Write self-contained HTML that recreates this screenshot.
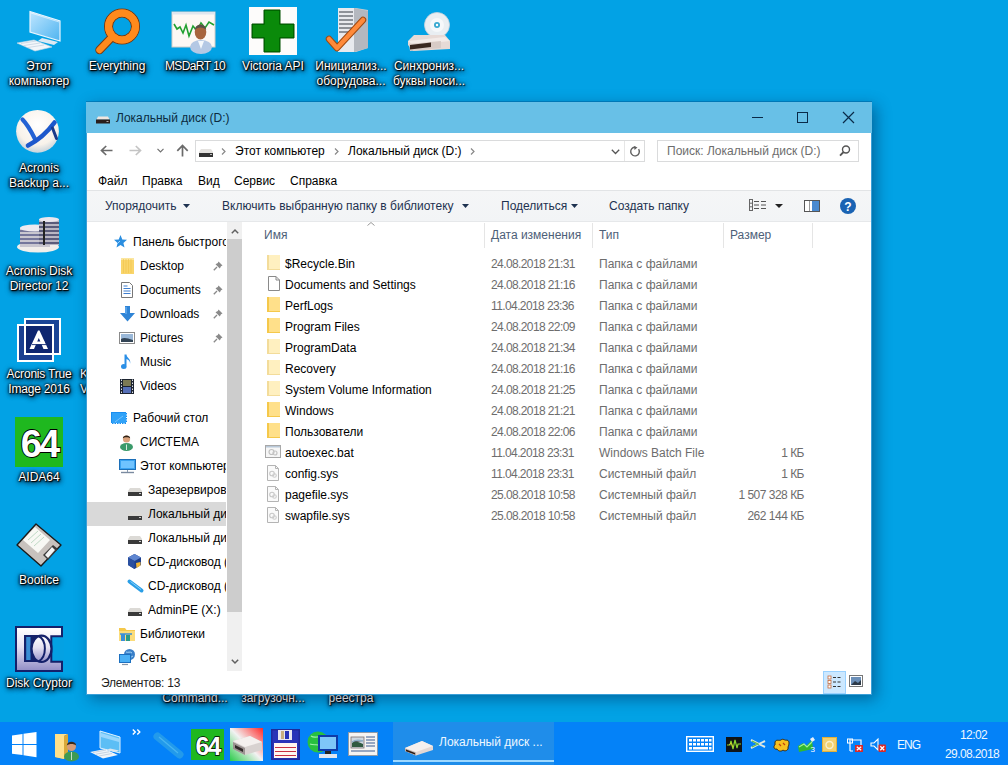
<!DOCTYPE html>
<html><head><meta charset="utf-8">
<style>
*{margin:0;padding:0;box-sizing:border-box}
html,body{width:1008px;height:765px;overflow:hidden}
body{background:#02a2e5;font-family:"Liberation Sans",sans-serif;font-size:12px;position:relative}
.a{position:absolute}
.x{position:absolute;font-size:12px;line-height:14px;white-space:nowrap;color:#000}
.dl{position:absolute;color:#fff;text-align:center;font-size:12px;line-height:15px;text-shadow:1px 1px 1px #000,0 0 2px #000,0 0 3px #000,1px 2px 4px #001020,1px 1px 6px rgba(0,20,50,.9);width:76px}
#win{position:absolute;left:86px;top:102px;width:786px;height:593px;background:#fff;border:1px solid #3a9fd8;border-top:0;box-shadow:4px 4px 14px rgba(0,30,70,.45)}
#taskbar{position:absolute;left:0;top:722px;width:1008px;height:43px;background:#0482f8}
.tb{color:#1e3250}
.hd{color:#4d6078}
.g{color:#6d6d6d}
.dt{letter-spacing:-0.6px}
.nv{overflow:hidden}
svg{position:absolute;overflow:visible}
</style></head><body>

<!--DESK-->
<!-- Этот компьютер -->
<svg style="left:16px;top:10px" width="46" height="44">
 <defs><linearGradient id="mg" x1="0" y1="0" x2="1" y2="1"><stop offset="0" stop-color="#bfe6ff"/><stop offset="1" stop-color="#4fb4f0"/></linearGradient></defs>
 <path d="M14 1.5L44 11V31L14 22z" fill="url(#mg)" stroke="#e9f6ff" stroke-width="1.2"/>
 <path d="M15 3L43 12" stroke="#fff" stroke-width="0.8" opacity=".7"/>
 <path d="M22 31L38 35L42 32L26 28z" fill="#dfe9f2"/>
 <path d="M1 33L18 30L36 37L19 41z" fill="#f3f6fa" stroke="#c9d6e2" stroke-width="0.6"/>
 <path d="M5 33.5L20 31M8 35.5L24 33M12 37.5L28 35" stroke="#b8c8d8" stroke-width="0.6"/>
</svg>
<div class="dl x" style="left:0px;top:59px;width:78px;text-align:center;line-height:15px">Этот<br>компьютер</div>

<!-- Everything -->
<svg style="left:94px;top:7px" width="48" height="48">
 <circle cx="28" cy="19.5" r="13.5" fill="none" stroke="#7a3a10" stroke-width="9"/>
 <circle cx="28" cy="19.5" r="13.5" fill="none" stroke="#ff8a1c" stroke-width="7"/>
 <path d="M18 30L5.5 43" stroke="#7a3a10" stroke-width="8.5" stroke-linecap="round"/>
 <path d="M18 30L5.5 43" stroke="#ff8a1c" stroke-width="6.5" stroke-linecap="round"/>
 <circle cx="28" cy="19.5" r="13.5" fill="none" stroke="#ff8a1c" stroke-width="7"/>
</svg>
<div class="dl x" style="left:78px;top:59px;width:78px;text-align:center">Everything</div>

<!-- MSDaRT -->
<svg style="left:171px;top:11px" width="46" height="42">
 <rect x="1" y="1" width="43" height="35" fill="#fdf8f4" stroke="#d4cec8" stroke-width="1"/>
 <rect x="1" y="1" width="43" height="2.5" fill="#e0e6ee"/>
 <path d="M3 13L6 18L9 16L12 22L15 14L18 25L22 15L26 20L30 12L34 17L38 11L43 14" fill="none" stroke="#22a030" stroke-width="1.6"/>
 <ellipse cx="30" cy="36" rx="11" ry="7" fill="#b4c8e4"/>
 <path d="M27 30L30 38L33 30z" fill="#f4f8fc"/>
 <ellipse cx="29.5" cy="21" rx="5.8" ry="7.5" fill="#a8643c"/>
 <path d="M23.8 19C24 12 35 12 35.2 19C33 15.5 26 15.5 23.8 19z" fill="#5a5048"/>
</svg>
<div class="dl x" style="left:156px;top:59px;width:78px;text-align:center;letter-spacing:-0.6px">MSDaRT 10</div>

<!-- Victoria -->
<svg style="left:249px;top:7px" width="48" height="48">
 <rect width="48" height="48" fill="#fdfcfb"/>
 <path d="M15 3H31V17H45V31H31V45H15V31H3V17H15z" fill="#007a00" stroke="#005000" stroke-width="1"/>
 <path d="M16 4H30V18H44V30H30V44H16V30H4V18H16z" fill="#0a8a0a"/>
</svg>
<div class="dl x" style="left:234px;top:59px;width:78px;text-align:center">Victoria API</div>

<!-- Инициализ -->
<svg style="left:326px;top:7px" width="44" height="46">
 <path d="M12 1H30L42 3V41L30 45H12z" fill="#c9ccd0"/>
 <path d="M12 1H28V45H12z" fill="#e8eaee"/>
 <path d="M28 1L42 4V41L28 45z" fill="#b4b8bf"/>
 <path d="M13 5H27M13 9H27M13 13H27M13 17H27M13 21H27M13 25H27" stroke="#70757c" stroke-width="1.6"/>
 <path d="M3 32L11 41L37 13" fill="none" stroke="#a04a10" stroke-width="6.5" stroke-linejoin="round" stroke-linecap="round"/>
 <path d="M3 32L11 41L37 13" fill="none" stroke="#ff8a3a" stroke-width="4.5" stroke-linejoin="round" stroke-linecap="round"/>
</svg>
<div class="dl x" style="left:312px;top:59px;width:78px;text-align:center">Инициализ...<br>оборудова...</div>

<!-- Синхрониз -->
<svg style="left:407px;top:11px" width="46" height="42">
 <circle cx="30" cy="14" r="12.5" fill="#e9eef2" stroke="#c9d2da" stroke-width="0.8"/>
 <circle cx="30" cy="14" r="7" fill="#f6f8fa"/>
 <circle cx="30" cy="14" r="3" fill="#38a8d0"/>
 <circle cx="30" cy="14" r="1.2" fill="#fff"/>
 <path d="M7 24H38L43 30V38L6 40L1 34V30z" fill="#e7dad6"/>
 <path d="M1 30L38 26L43 30L6 34z" fill="#f3ebe8"/>
 <path d="M2 33L34 30V37L3 40z" fill="#d8cbc6"/>
 <path d="M3 34L24 31.5V36L3 38.5z" fill="#3a2820"/>
</svg>
<div class="dl x" style="left:390px;top:59px;width:78px;text-align:center">Синхрониз...<br>буквы носи...</div>

<!-- Acronis Backup -->
<svg style="left:15px;top:109px" width="46" height="46">
 <defs><radialGradient id="ab" cx=".5" cy=".35" r=".62"><stop offset="0" stop-color="#ffffff"/><stop offset=".75" stop-color="#f8f2ea"/><stop offset="1" stop-color="#cfd8de"/></radialGradient></defs>
 <circle cx="22.5" cy="22.3" r="21.4" fill="url(#ab)"/>
 <path d="M7.5 10.5C11 14 15 20 20 30" fill="none" stroke="#2462d4" stroke-width="4.2" stroke-linecap="round"/>
 <path d="M13 36.5C22 32 31 25 39.5 13.5" fill="none" stroke="#1d58cc" stroke-width="4.6" stroke-linecap="round"/>
 <path d="M37.5 19L41.5 29.5" stroke="#1a3a8a" stroke-width="3" stroke-linecap="round"/>
</svg>
<div class="dl x" style="left:0px;top:161px;width:78px;text-align:center">Acronis<br>Backup a...</div>

<!-- Acronis Disk Director -->
<svg style="left:15px;top:216px" width="48" height="38">
 <ellipse cx="23" cy="31" rx="21" ry="5.5" fill="#f2eeea"/>
 <rect x="5" y="12" width="30" height="19" fill="#c9c6cf"/>
 <path d="M5 15H35M5 19H35M5 23H35M5 27H35" stroke="#595c8a" stroke-width="1.4"/>
 <ellipse cx="20" cy="12" rx="15" ry="3.5" fill="#eeeaf0"/>
 <rect x="24" y="3" width="20" height="26" fill="#b9b6c2"/>
 <path d="M24 7H44M24 11H44M24 15H44M24 19H44M24 23H44M24 27H44" stroke="#3d3f64" stroke-width="1.4"/>
 <ellipse cx="34" cy="3.5" rx="10" ry="2.5" fill="#ebe7ee"/>
 <path d="M29 5V29" stroke="#222" stroke-width="2"/>
</svg>
<div class="dl x" style="left:0px;top:264px;width:78px;text-align:center">Acronis Disk<br>Director 12</div>

<!-- Acronis True Image -->
<svg style="left:16px;top:317px" width="46" height="46">
 <rect x="1" y="7" width="37" height="37" fill="#1b3f90"/>
 <rect x="8" y="1" width="37" height="37" fill="#1a4496"/>
 <rect x="9" y="8" width="28" height="29" fill="#0e2670"/>
 <rect x="9" y="2" width="35" height="35" fill="none" stroke="#fff" stroke-width="2"/>
 <rect x="2" y="8" width="35" height="36" fill="none" stroke="#fff" stroke-width="2"/>
 <path d="M13.5 32L22 13.5H23.5L32 32H27.5L22.8 21L18 32z" fill="#fff"/>
 <rect x="17" y="24.5" width="11.5" height="2.8" fill="#fff"/>
 <path d="M16 27.6H30" stroke="#0e2670" stroke-width="0.9"/>
</svg>
<div class="dl x" style="left:0px;top:367px;width:78px;text-align:center;letter-spacing:-0.2px">Acronis True<br>Image 2016</div>
<div class="dl x" style="left:80px;top:367px;width:20px;text-align:left">K<br>V</div>

<!-- AIDA64 -->
<svg style="left:15px;top:417px" width="48" height="50">
 <rect width="48" height="50" fill="#1fb81f"/>
 <text x="24" y="39.5" font-family="Liberation Sans" font-weight="bold" font-size="38" fill="#fff" stroke="#000" stroke-width="1.8" paint-order="stroke" text-anchor="middle" letter-spacing="-3">64</text>
</svg>
<div class="dl x" style="left:0px;top:470px;width:78px;text-align:center">AIDA64</div>

<!-- Bootlce -->
<svg style="left:16px;top:523px" width="46" height="44">
 <path d="M20 1L45 22L25 43L1 22z" fill="#c8c2be" stroke="#1a1a1a" stroke-width="1.4" stroke-linejoin="round"/>
 <path d="M19 4L34 17L22 30L7 17z" fill="#f8f8f4"/>
 <path d="M12 17L22 8M15 20L25 11M18 23L28 14" stroke="#b0d0b8" stroke-width="0.8"/>
 <path d="M27 32L37 22L42 26L32 37z" fill="#3a3a3a"/>
 <path d="M29 32L36 24L39 27L32 35z" fill="#f4f4f4"/>
</svg>
<div class="dl x" style="left:0px;top:573px;width:78px;text-align:center">Bootlce</div>

<!-- Disk Cryptor -->
<svg style="left:14px;top:625px" width="50" height="48">
 <defs><linearGradient id="dc" x1="0" y1="0" x2="0" y2="1"><stop offset="0" stop-color="#ffffff"/><stop offset=".45" stop-color="#e4e0f2"/><stop offset="1" stop-color="#9490c8"/></linearGradient></defs>
 <rect x="1" y="1" width="48" height="46" fill="#14206a"/>
 <rect x="3" y="3" width="44" height="42" fill="url(#dc)"/>
 <rect x="37.5" y="11" width="12.5" height="26" fill="#04a1e3"/>
 <path d="M49 11.2H37.3V36.8H49" fill="none" stroke="#14206a" stroke-width="2"/>
 <rect x="10" y="10" width="18" height="27" fill="#14206a"/>
 <rect x="12.2" y="12" width="4.3" height="23" fill="#3a8ed4"/>
 <ellipse cx="27.5" cy="23.8" rx="10" ry="13.2" fill="url(#dc)" stroke="#14206a" stroke-width="2.2"/>
 <path d="M24.5 11C33 15 33 32 24.5 36.5" fill="none" stroke="#14206a" stroke-width="2"/>
</svg>
<div class="dl x" style="left:0px;top:676px;width:78px;text-align:center">Disk Cryptor</div>

<!-- labels under window -->
<div class="dl x" style="left:156px;top:691px;width:78px;text-align:center">Command...</div>
<div class="dl x" style="left:234px;top:691px;width:78px;text-align:center">загрузочн...</div>
<div class="dl x" style="left:312px;top:691px;width:78px;text-align:center">реестра</div>

<!--/DESK-->
<!-- ============ WINDOW ============ -->
<div id="win"></div>
<!-- title bar -->
<div class="a" style="left:86px;top:101px;width:786px;height:1px;background:rgba(0,90,150,.45)"></div>
<div class="a" style="left:86px;top:102px;width:786px;height:31px;background:#68c0e7"></div>
<svg style="left:96px;top:116px" width="14" height="8"><path d="M2 0.5h10l1.5 3H0.5z" fill="#f0e6e0"/><rect x="0" y="3.5" width="14" height="4" fill="#2a1e1c"/><rect x="10.5" y="5" width="2" height="1" fill="#b0a8a8"/></svg>
<div class="x" style="left:116px;top:111px;color:#0b2b40">Локальный диск (D:)</div>
<svg style="left:752px;top:117px" width="11" height="1"><rect width="11" height="1" fill="#0a2a48"/></svg>
<svg style="left:797px;top:112px" width="11" height="11"><rect x="0.5" y="0.5" width="10" height="10" fill="none" stroke="#0a2a48"/></svg>
<svg style="left:843px;top:112px" width="11" height="11"><path d="M0 0L11 11M11 0L0 11" stroke="#0a2a48" stroke-width="1.2"/></svg>

<!-- nav buttons -->
<svg style="left:100px;top:145px" width="13" height="11"><path d="M12.5 5.5H1.8M6.2 1L1.5 5.5L6.2 10" fill="none" stroke="#6a6a6a" stroke-width="1.7"/></svg>
<svg style="left:129px;top:145px" width="13" height="11"><path d="M0.5 5.5H11.2M6.8 1L11.5 5.5L6.8 10" fill="none" stroke="#c4c4c4" stroke-width="1.7"/></svg>
<svg style="left:157px;top:148px" width="7" height="5"><path d="M0.5 0.8L3.5 3.8L6.5 0.8" fill="none" stroke="#707070" stroke-width="1.2"/></svg>
<svg style="left:176px;top:144px" width="13" height="13"><path d="M6.5 12.5V1.8M1.3 6.8L6.5 1.5L11.7 6.8" fill="none" stroke="#6a6a6a" stroke-width="1.7"/></svg>
<!-- address box -->
<div class="a" style="left:195px;top:140px;width:450px;height:22px;border:1px solid #dadbdc;background:#fff"></div>
<div class="a" style="left:624px;top:141px;width:1px;height:20px;background:#e6e6e6"></div>
<svg style="left:199px;top:149px" width="14" height="8"><path d="M2 0h10l2 3v5H0V3z" fill="#e4e2df"/><rect x="0" y="4" width="14" height="4" fill="#333"/><rect x="11" y="5" width="2" height="1" fill="#bbb"/></svg>
<svg style="left:221px;top:148px" width="5" height="7"><path d="M1 0.5L4 3.5L1 6.5" fill="none" stroke="#888" stroke-width="1.2"/></svg>
<div class="x" style="left:235px;top:144px">Этот компьютер</div>
<svg style="left:334px;top:148px" width="5" height="7"><path d="M1 0.5L4 3.5L1 6.5" fill="none" stroke="#888" stroke-width="1.2"/></svg>
<div class="x" style="left:348px;top:144px">Локальный диск (D:)</div>
<svg style="left:470px;top:148px" width="5" height="7"><path d="M1 0.5L4 3.5L1 6.5" fill="none" stroke="#888" stroke-width="1.2"/></svg>
<svg style="left:611px;top:149px" width="9" height="6"><path d="M0.8 0.8L4.5 4.5L8.2 0.8" fill="none" stroke="#555" stroke-width="1.3"/></svg>
<svg style="left:630px;top:146px" width="11" height="11"><path d="M8.6 3.2A4.3 4.3 0 1 1 5.5 1.3" fill="none" stroke="#606060" stroke-width="1.4"/><path d="M4 0L7.5 1.5L4.5 4z" fill="#606060"/></svg>
<!-- search -->
<div class="a" style="left:657px;top:140px;width:202px;height:22px;border:1px solid #dadbdc;background:#fff"></div>
<div class="x g" style="left:667px;top:144px">Поиск: Локальный диск (D:)</div>
<svg style="left:839px;top:145px" width="12" height="12"><circle cx="7" cy="4.5" r="3.5" fill="none" stroke="#555" stroke-width="1.4"/><path d="M4.6 7L1 10.6" stroke="#555" stroke-width="1.8"/></svg>

<!-- menu -->
<div class="x" style="left:98px;top:174px">Файл</div>
<div class="x" style="left:142px;top:174px">Правка</div>
<div class="x" style="left:198px;top:174px">Вид</div>
<div class="x" style="left:234px;top:174px">Сервис</div>
<div class="x" style="left:290px;top:174px">Справка</div>

<!-- toolbar -->
<div class="a" style="left:87px;top:190px;width:784px;height:1px;background:#e2e4e6"></div>
<div class="a" style="left:87px;top:191px;width:784px;height:30px;background:linear-gradient(#f5f6f7,#f2f4f6)"></div>
<div class="a" style="left:87px;top:221px;width:784px;height:1px;background:#e6e8ea"></div>
<div class="x tb" style="left:105px;top:199px">Упорядочить</div>
<svg style="left:183px;top:204px" width="7" height="4"><path d="M0 0H7L3.5 4z" fill="#1e3250"/></svg>
<div class="x tb" style="left:222px;top:199px">Включить выбранную папку в библиотеку</div>
<svg style="left:462px;top:204px" width="7" height="4"><path d="M0 0H7L3.5 4z" fill="#1e3250"/></svg>
<div class="x tb" style="left:501px;top:199px">Поделиться</div>
<svg style="left:571px;top:204px" width="7" height="4"><path d="M0 0H7L3.5 4z" fill="#1e3250"/></svg>
<div class="x tb" style="left:609px;top:199px">Создать папку</div>
<svg style="left:749px;top:199px" width="17" height="12"><g fill="none" stroke="#666" stroke-width="1"><rect x="0.5" y="0.5" width="3" height="11"/><path d="M0.5 4.2h3M0.5 7.8h3"/></g><g stroke="#555" stroke-width="1.2"><path d="M5 2.5h5M12 2.5h5M5 6h5M12 6h5M5 9.5h5M12 9.5h5"/></g></svg>
<svg style="left:775px;top:204px" width="8" height="4"><path d="M0 0H8L4 4z" fill="#222"/></svg>
<svg style="left:804px;top:200px" width="16" height="12"><rect x="0.5" y="0.5" width="15" height="11" fill="#fff" stroke="#555"/><rect x="8" y="1" width="7" height="10" fill="#4a8ad0"/><path d="M5.5 1v10" stroke="#999"/></svg>
<svg style="left:840px;top:198px" width="16" height="16"><circle cx="8" cy="8" r="8" fill="#1a63b3"/><text x="8" y="12.5" font-family="Liberation Sans" font-weight="bold" font-size="12" fill="#fff" text-anchor="middle">?</text></svg>

<!-- nav pane -->
<div class="a" style="left:87px;top:502px;width:139px;height:24px;background:#d9d9d9"></div>
<div class="a" style="left:227px;top:222px;width:15px;height:449px;background:#f0f0f0"></div>
<div class="a" style="left:227px;top:239px;width:15px;height:373px;background:#cdcdcd"></div>
<svg style="left:231px;top:229px" width="8" height="5"><path d="M0.8 4.2L4 1L7.2 4.2" fill="none" stroke="#606060" stroke-width="1.5"/></svg>
<svg style="left:231px;top:659px" width="8" height="5"><path d="M0.8 0.8L4 4L7.2 0.8" fill="none" stroke="#606060" stroke-width="1.5"/></svg>

<div class="a nv" style="left:87px;top:222px;width:139px;height:449px">
</div>
<!--NAV-->
<svg style="left:114px;top:235px" width="13" height="13"><path d="M6.5 0L8.3 4.4L13 4.8L9.4 7.9L10.5 12.5L6.5 10L2.5 12.5L3.6 7.9L0 4.8L4.7 4.4z" fill="#2a8ee0"/><path d="M3 9L6 6" stroke="#9fd3ff" stroke-width="1"/></svg>
<div class="x nv" style="left:133px;top:235px;width:93px">Панель быстрого доступа</div>
<svg style="left:120px;top:257px" width="14" height="17"><rect x="1" y="1" width="13" height="16" fill="#f9d56b"/><rect x="1" y="1" width="13" height="2" fill="#fbe6a0"/><path d="M3.5 2v14M6 2v14M8.5 2v14M11 2v14" stroke="#f2c64e" stroke-width="0.7"/></svg>
<div class="x nv" style="left:140px;top:259px;width:86px">Desktop</div>
<svg style="left:121px;top:282px" width="12" height="16"><path d="M0.5 0.5H8.5L11.5 3.5V15.5H0.5z" fill="#fff" stroke="#777"/><path d="M2.5 4h4M2.5 6.5h7M2.5 9h7M2.5 11.5h7" stroke="#3f7fd0" stroke-width="1.2"/></svg>
<div class="x nv" style="left:140px;top:283px;width:86px">Documents</div>
<svg style="left:120px;top:306px" width="15" height="16"><path d="M5 0H10V7H15L7.5 15.5L0 7H5z" fill="#2f84d6"/><path d="M6 1V8" stroke="#7cc0ff" stroke-width="1"/></svg>
<div class="x nv" style="left:140px;top:307px;width:86px">Downloads</div>
<svg style="left:119px;top:332px" width="16" height="12"><rect x="0.5" y="0.5" width="15" height="11" fill="#fff" stroke="#8a8a8a"/><rect x="2" y="2" width="12" height="8" fill="#9ab8d8"/><path d="M2 10V7C5 5 8 6 14 8V10z" fill="#334455"/></svg>
<div class="x nv" style="left:140px;top:331px;width:86px">Pictures</div>
<svg style="left:121px;top:354px" width="11" height="16"><path d="M4.5 0.5V11.5" stroke="#2b8fe6" stroke-width="2"/><ellipse cx="2.8" cy="12.5" rx="2.8" ry="2.5" fill="#2b8fe6"/><path d="M5 0.5C6 4 10.5 5 9 10C9.5 7 7 5.5 5 5z" fill="#2b8fe6"/></svg>
<div class="x nv" style="left:140px;top:355px;width:86px">Music</div>
<svg style="left:120px;top:379px" width="14" height="15"><rect width="14" height="15" fill="#1d2430"/><rect x="3" y="1" width="8" height="6" fill="#7c7a55"/><rect x="3" y="8" width="8" height="6" fill="#5670b8"/><path d="M1.5 0.5v14M12.5 0.5v14" stroke="#dfe3ea" stroke-width="1" stroke-dasharray="1.5 1.5"/></svg>
<div class="x nv" style="left:140px;top:379px;width:86px">Videos</div>
<svg style="left:111px;top:412px" width="16" height="12"><rect width="16" height="12" fill="#1a8ef0"/><rect x="1" y="1" width="14" height="10" fill="#30a2f8"/><path d="M0 11.5H16M15.5 0V12" stroke="#fff" stroke-width="1" stroke-dasharray="1 1.5"/><path d="M4 10L12 4" stroke="#bfe2ff" stroke-width="0.8" opacity=".6"/></svg>
<div class="x nv" style="left:133px;top:411px;width:93px">Рабочий стол</div>
<svg style="left:120px;top:434px" width="13" height="16"><ellipse cx="6.5" cy="13" rx="6.5" ry="4" fill="#3a9a6a"/><circle cx="6.5" cy="5" r="3.6" fill="#d8a07a"/><path d="M2.8 4.3C3 0.5 10 0.5 10.2 4.3C9 2.8 4 2.8 2.8 4.3z" fill="#2d2218"/><path d="M6.5 10.5V16" stroke="#fff" stroke-width="0.8"/></svg>
<div class="x nv" style="left:140px;top:435px;width:86px">СИСТЕМА</div>
<svg style="left:119px;top:459px" width="17" height="15"><rect x="0.5" y="0.5" width="16" height="10" fill="#3ba3f2" stroke="#1c6fb8"/><rect x="2" y="2" width="13" height="7" fill="#70c3ff"/><path d="M2 13.5H15" stroke="#7a8aa0" stroke-width="1.4"/><path d="M8.5 11v2" stroke="#8a9ab0"/></svg>
<div class="x nv" style="left:140px;top:459px;width:86px">Этот компьютер</div>
<svg style="left:128px;top:488px" width="14" height="8"><path d="M2 0h10l2 3v5H0V3z" fill="#dcdad6"/><rect x="0" y="4" width="14" height="4" fill="#3a3a3a"/><rect x="11" y="5" width="2" height="1" fill="#ccc"/></svg>
<div class="x nv" style="left:148px;top:483px;width:78px">Зарезервировано системой</div>
<svg style="left:128px;top:512px" width="14" height="8"><path d="M2 0h10l2 3v5H0V3z" fill="#dcdad6"/><rect x="0" y="4" width="14" height="4" fill="#3a3a3a"/><rect x="11" y="5" width="2" height="1" fill="#ccc"/></svg>
<div class="x nv" style="left:148px;top:507px;width:78px">Локальный диск (D:)</div>
<svg style="left:128px;top:536px" width="14" height="8"><path d="M2 0h10l2 3v5H0V3z" fill="#dcdad6"/><rect x="0" y="4" width="14" height="4" fill="#3a3a3a"/><rect x="11" y="5" width="2" height="1" fill="#ccc"/></svg>
<div class="x nv" style="left:148px;top:531px;width:78px">Локальный диск (C:)</div>
<svg style="left:128px;top:554px" width="13" height="15"><path d="M6.5 0L13 3.5V11L6.5 15L0 11V3.5z" fill="#1e3f8c"/><path d="M6.5 0L13 3.5L6.5 7L0 3.5z" fill="#5f86d0"/><path d="M6.5 7V15L0 11V3.5z" fill="#2a4fa0"/><path d="M8 9L12.5 8V11.5L8.5 14z" fill="#f2b634"/></svg>
<div class="x nv" style="left:148px;top:555px;width:78px">CD-дисковод (F:)</div>
<svg style="left:127px;top:579px" width="17" height="14"><path d="M2.5 2.5L14.5 11.5" stroke="#2a9ee6" stroke-width="4" stroke-linecap="round"/><path d="M3.5 2.5L14 10.5" stroke="#8fd4ff" stroke-width="0.9"/></svg>
<div class="x nv" style="left:148px;top:579px;width:78px">CD-дисковод (G:)</div>
<svg style="left:128px;top:608px" width="14" height="8"><path d="M2 0h10l2 3v5H0V3z" fill="#dcdad6"/><rect x="0" y="4" width="14" height="4" fill="#3a3a3a"/><rect x="11" y="5" width="2" height="1" fill="#ccc"/></svg>
<div class="x nv" style="left:148px;top:603px;width:78px">AdminPE (X:)</div>
<svg style="left:119px;top:626px" width="16" height="15"><path d="M0 2H6L7.5 4H16V15H0z" fill="#f5c84a"/><rect x="0" y="5" width="16" height="10" fill="#fbdc7a"/><rect x="2" y="8" width="4" height="7" fill="#3a8fd8"/><rect x="7" y="9" width="4" height="6" fill="#2a9a8a"/><path d="M1 8H13" stroke="#3a8fd8" stroke-width="1.5"/></svg>
<div class="x nv" style="left:140px;top:627px;width:86px">Библиотеки</div>
<svg style="left:119px;top:649px" width="16" height="17"><circle cx="10.5" cy="5.5" r="5.5" fill="#3a7fc8"/><path d="M7 3C9 4 11 2 13 4M8 8C10 7 12 9 14 7" stroke="#aee0ff" stroke-width="0.9" fill="none"/><rect x="0.5" y="5.5" width="11" height="8" fill="#4ab0f5" stroke="#1c70c0"/><path d="M3 15.5H9" stroke="#8796a8" stroke-width="1.2"/></svg>
<div class="x nv" style="left:140px;top:651px;width:86px">Сеть</div>
<svg style="left:213px;top:261px" width="10" height="10"><path d="M5.5 0.5L9.5 4.5L8 5.2L6.8 7.5L2.5 3.2L4.8 2z" fill="#8a8a8a"/><path d="M4 6L0.8 9.2" stroke="#8a8a8a" stroke-width="1.3"/></svg>
<svg style="left:213px;top:285px" width="10" height="10"><path d="M5.5 0.5L9.5 4.5L8 5.2L6.8 7.5L2.5 3.2L4.8 2z" fill="#8a8a8a"/><path d="M4 6L0.8 9.2" stroke="#8a8a8a" stroke-width="1.3"/></svg>
<svg style="left:213px;top:309px" width="10" height="10"><path d="M5.5 0.5L9.5 4.5L8 5.2L6.8 7.5L2.5 3.2L4.8 2z" fill="#8a8a8a"/><path d="M4 6L0.8 9.2" stroke="#8a8a8a" stroke-width="1.3"/></svg>
<svg style="left:213px;top:333px" width="10" height="10"><path d="M5.5 0.5L9.5 4.5L8 5.2L6.8 7.5L2.5 3.2L4.8 2z" fill="#8a8a8a"/><path d="M4 6L0.8 9.2" stroke="#8a8a8a" stroke-width="1.3"/></svg>
<!--/NAV-->

<!-- column headers -->
<div class="a" style="left:484px;top:223px;width:1px;height:25px;background:#e5e5e5"></div>
<div class="a" style="left:592px;top:223px;width:1px;height:25px;background:#e5e5e5"></div>
<div class="a" style="left:723px;top:223px;width:1px;height:25px;background:#e5e5e5"></div>
<div class="a" style="left:812px;top:223px;width:1px;height:25px;background:#e5e5e5"></div>
<svg style="left:367px;top:222px" width="8" height="4"><path d="M0.5 3.5L4 0.5L7.5 3.5" fill="none" stroke="#999" stroke-width="1"/></svg>
<div class="x hd" style="left:264px;top:228px">Имя</div>
<div class="x hd" style="left:491px;top:228px">Дата изменения</div>
<div class="x hd" style="left:599px;top:228px">Тип</div>
<div class="x hd" style="left:730px;top:228px">Размер</div>

<!--ROWS-->
<svg style="left:267px;top:255px" width="13" height="15"><rect x="0" y="0" width="13" height="15" fill="#fff0c0"/><rect x="0" y="0" width="2" height="15" fill="#f3dc9a"/><path d="M0 14.5H13" stroke="#f3dc9a"/></svg>
<div class="x" style="left:285px;top:257px">$Recycle.Bin</div>
<div class="x g dt" style="left:491px;top:257px">24.08.2018 21:31</div>
<div class="x g" style="left:599px;top:257px">Папка с файлами</div>
<svg style="left:268px;top:276px" width="12" height="15"><path d="M0.5 0.5H8L11.5 4V14.5H0.5z" fill="#fff" stroke="#8a8a8a"/><path d="M8 0.5V4H11.5" fill="none" stroke="#8a8a8a"/></svg>
<div class="x" style="left:285px;top:278px">Documents and Settings</div>
<div class="x g dt" style="left:491px;top:278px">24.08.2018 21:16</div>
<div class="x g" style="left:599px;top:278px">Папка с файлами</div>
<svg style="left:267px;top:297px" width="13" height="15"><rect x="0" y="0" width="13" height="15" fill="#ffe08a"/><rect x="0" y="0" width="2" height="15" fill="#f5c84a"/><path d="M0 14.5H13" stroke="#f5c84a"/></svg>
<div class="x" style="left:285px;top:299px">PerfLogs</div>
<div class="x g dt" style="left:491px;top:299px">11.04.2018 23:36</div>
<div class="x g" style="left:599px;top:299px">Папка с файлами</div>
<svg style="left:267px;top:318px" width="13" height="15"><rect x="0" y="0" width="13" height="15" fill="#ffe08a"/><rect x="0" y="0" width="2" height="15" fill="#f5c84a"/><path d="M0 14.5H13" stroke="#f5c84a"/></svg>
<div class="x" style="left:285px;top:320px">Program Files</div>
<div class="x g dt" style="left:491px;top:320px">24.08.2018 22:09</div>
<div class="x g" style="left:599px;top:320px">Папка с файлами</div>
<svg style="left:267px;top:339px" width="13" height="15"><rect x="0" y="0" width="13" height="15" fill="#fff0c0"/><rect x="0" y="0" width="2" height="15" fill="#f3dc9a"/><path d="M0 14.5H13" stroke="#f3dc9a"/></svg>
<div class="x" style="left:285px;top:341px">ProgramData</div>
<div class="x g dt" style="left:491px;top:341px">24.08.2018 21:34</div>
<div class="x g" style="left:599px;top:341px">Папка с файлами</div>
<svg style="left:267px;top:360px" width="13" height="15"><rect x="0" y="0" width="13" height="15" fill="#fff0c0"/><rect x="0" y="0" width="2" height="15" fill="#f3dc9a"/><path d="M0 14.5H13" stroke="#f3dc9a"/></svg>
<div class="x" style="left:285px;top:362px">Recovery</div>
<div class="x g dt" style="left:491px;top:362px">24.08.2018 21:16</div>
<div class="x g" style="left:599px;top:362px">Папка с файлами</div>
<svg style="left:267px;top:381px" width="13" height="15"><rect x="0" y="0" width="13" height="15" fill="#fff0c0"/><rect x="0" y="0" width="2" height="15" fill="#f3dc9a"/><path d="M0 14.5H13" stroke="#f3dc9a"/></svg>
<div class="x" style="left:285px;top:383px">System Volume Information</div>
<div class="x g dt" style="left:491px;top:383px">24.08.2018 21:25</div>
<div class="x g" style="left:599px;top:383px">Папка с файлами</div>
<svg style="left:267px;top:402px" width="13" height="15"><rect x="0" y="0" width="13" height="15" fill="#ffe08a"/><rect x="0" y="0" width="2" height="15" fill="#f5c84a"/><path d="M0 14.5H13" stroke="#f5c84a"/></svg>
<div class="x" style="left:285px;top:404px">Windows</div>
<div class="x g dt" style="left:491px;top:404px">24.08.2018 21:21</div>
<div class="x g" style="left:599px;top:404px">Папка с файлами</div>
<svg style="left:267px;top:423px" width="13" height="15"><rect x="0" y="0" width="13" height="15" fill="#ffe08a"/><rect x="0" y="0" width="2" height="15" fill="#f5c84a"/><path d="M0 14.5H13" stroke="#f5c84a"/></svg>
<div class="x" style="left:285px;top:425px">Пользователи</div>
<div class="x g dt" style="left:491px;top:425px">24.08.2018 22:06</div>
<div class="x g" style="left:599px;top:425px">Папка с файлами</div>
<svg style="left:265px;top:445px" width="16" height="13"><rect x="0.5" y="0.5" width="15" height="12" fill="#f6f6f6" stroke="#a8a8a8"/><rect x="1" y="1" width="14" height="1.5" fill="#b8c8d8"/><circle cx="6.5" cy="7" r="2.5" fill="none" stroke="#c0c0c0" stroke-width="1.2"/><circle cx="10" cy="8" r="2" fill="none" stroke="#c4c4c4" stroke-width="1.2"/></svg>
<div class="x" style="left:285px;top:446px">autoexec.bat</div>
<div class="x g dt" style="left:491px;top:446px">11.04.2018 23:31</div>
<div class="x g" style="left:599px;top:446px">Windows Batch File</div>
<div class="x g" style="left:640px;width:164px;text-align:right;top:446px;letter-spacing:-0.5px">1 КБ</div>
<svg style="left:267px;top:465px" width="12" height="16"><path d="M0.5 0.5H8.5L11.5 3.5V15.5H0.5z" fill="#fafafa" stroke="#b4b4b4"/><path d="M8.5 0.5V3.5H11.5" fill="none" stroke="#b4b4b4"/><circle cx="5" cy="8.5" r="2.3" fill="none" stroke="#c8c8c8" stroke-width="1.1"/><circle cx="7.5" cy="10.5" r="1.8" fill="none" stroke="#ccc" stroke-width="1.1"/></svg>
<div class="x" style="left:285px;top:467px">config.sys</div>
<div class="x g dt" style="left:491px;top:467px">11.04.2018 23:31</div>
<div class="x g" style="left:599px;top:467px">Системный файл</div>
<div class="x g" style="left:640px;width:164px;text-align:right;top:467px;letter-spacing:-0.5px">1 КБ</div>
<svg style="left:267px;top:486px" width="12" height="16"><path d="M0.5 0.5H8.5L11.5 3.5V15.5H0.5z" fill="#fafafa" stroke="#b4b4b4"/><path d="M8.5 0.5V3.5H11.5" fill="none" stroke="#b4b4b4"/><circle cx="5" cy="8.5" r="2.3" fill="none" stroke="#c8c8c8" stroke-width="1.1"/><circle cx="7.5" cy="10.5" r="1.8" fill="none" stroke="#ccc" stroke-width="1.1"/></svg>
<div class="x" style="left:285px;top:488px">pagefile.sys</div>
<div class="x g dt" style="left:491px;top:488px">25.08.2018 10:58</div>
<div class="x g" style="left:599px;top:488px">Системный файл</div>
<div class="x g" style="left:640px;width:164px;text-align:right;top:488px;letter-spacing:-0.5px">1 507 328 КБ</div>
<svg style="left:267px;top:507px" width="12" height="16"><path d="M0.5 0.5H8.5L11.5 3.5V15.5H0.5z" fill="#fafafa" stroke="#b4b4b4"/><path d="M8.5 0.5V3.5H11.5" fill="none" stroke="#b4b4b4"/><circle cx="5" cy="8.5" r="2.3" fill="none" stroke="#c8c8c8" stroke-width="1.1"/><circle cx="7.5" cy="10.5" r="1.8" fill="none" stroke="#ccc" stroke-width="1.1"/></svg>
<div class="x" style="left:285px;top:509px">swapfile.sys</div>
<div class="x g dt" style="left:491px;top:509px">25.08.2018 10:58</div>
<div class="x g" style="left:599px;top:509px">Системный файл</div>
<div class="x g" style="left:640px;width:164px;text-align:right;top:509px;letter-spacing:-0.5px">262 144 КБ</div>
<!--/ROWS-->

<!-- status bar -->
<div class="x" style="left:101px;top:676px;color:#1e1e1e;letter-spacing:-0.2px">Элементов: 13</div>
<div class="a" style="left:823px;top:671px;width:23px;height:23px;background:#cce8ff;border:1px solid #99d1ff"></div>
<svg style="left:827px;top:675px" width="15" height="14"><g fill="#fff" stroke="#c86a3a" stroke-width="0.8"><rect x="1" y="1" width="3" height="3"/><rect x="1" y="5.5" width="3" height="3"/><rect x="1" y="10" width="3" height="3"/></g><g stroke="#333" stroke-width="1"><path d="M6 2.5h3M10.5 2.5h3M6 7h3M10.5 7h3M6 11.5h3M10.5 11.5h3"/></g></svg>
<svg style="left:849px;top:675px" width="14" height="12"><rect x="0.5" y="0.5" width="13" height="11" fill="#fff" stroke="#777"/><rect x="2" y="2" width="10" height="8" fill="#6b8fb8"/><path d="M2 10L6 6L9 8L12 5V10z" fill="#2d3a48"/></svg>

<!-- ============ TASKBAR ============ -->
<!--TASK-->
<div id="taskbar"></div>
<!-- start -->
<svg style="left:12px;top:732px" width="25" height="26">
 <path d="M0 3.5L10.5 2V12H0z" fill="#fff"/>
 <path d="M11.5 1.8L24.5 0V12H11.5z" fill="#fff"/>
 <path d="M0 13H10.5V23L0 21.7z" fill="#fff"/>
 <path d="M11.5 13H24.5V25.3L11.5 23.2z" fill="#fff"/>
</svg>
<!-- explorer user -->
<svg style="left:55px;top:733px" width="24" height="27">
 <path d="M0 2H9V26L0 24z" fill="#f3c94e"/>
 <path d="M0 1H13L9 3V26L0 24z" fill="#ffe08a"/>
 <path d="M9 3L13 1V22L9 26z" fill="#d9a93a"/>
 <ellipse cx="16.5" cy="23.5" rx="7.5" ry="5" fill="#3f9a52"/>
 <circle cx="16.5" cy="13.5" r="4.5" fill="#d69c78"/>
 <path d="M11.8 12.5C12 7.5 21 7.5 21.2 12.5C19 10.5 14 10.5 11.8 12.5z" fill="#3a2a1c"/>
 <path d="M16.5 19V27" stroke="#e6f0e8" stroke-width="0.8"/>
</svg>
<!-- computer -->
<svg style="left:89px;top:730px" width="32" height="29">
 <path d="M11 1L31 7V23L11 18z" fill="#5cbef5" stroke="#dff2ff" stroke-width="1"/>
 <path d="M12 3L30 8.5V12L12 7z" fill="#a7dcff" opacity=".8"/>
 <path d="M1 22L16 19L29 25L14 28.5z" fill="#eef3f8"/>
 <path d="M4 22.5L17 20M7 24.2L20 21.8M10 26L23 23.5" stroke="#b5c6d8" stroke-width="0.7"/>
 <path d="M18 20L27 22L30 20.5L21 18.5z" fill="#dce6ee"/>
</svg>
<!-- chevrons -->
<svg style="left:132px;top:729px" width="11" height="6"><path d="M0.8 0.5L3.3 3L0.8 5.5M5.3 0.5L7.8 3L5.3 5.5" fill="none" stroke="#fff" stroke-width="1.4"/></svg>
<!-- faded stick -->
<svg style="left:153px;top:732px" width="31" height="27"><path d="M4.5 4.5L26.5 22.5" stroke="#2aa0e8" stroke-width="8" stroke-linecap="round" opacity=".8"/><path d="M6 5L25 21" stroke="#58c0f4" stroke-width="1.2" opacity=".7"/></svg>
<!-- aida64 -->
<svg style="left:191px;top:729px" width="33" height="31">
 <rect width="33" height="31" fill="#1fb81f"/>
 <text x="16.5" y="25.5" font-family="Liberation Sans" font-weight="bold" font-size="25" fill="#fff" stroke="#000" stroke-width="1.4" paint-order="stroke" text-anchor="middle" letter-spacing="-2">64</text>
</svg>
<!-- hdd w red/green -->
<svg style="left:230px;top:728px" width="33" height="33">
 <defs><linearGradient id="rg" x1="1" y1="0" x2="0" y2="1"><stop offset="0" stop-color="#ff2a2a"/><stop offset=".5" stop-color="#f2f2f2"/><stop offset="1" stop-color="#2acc4a"/></linearGradient></defs>
 <rect width="33" height="33" fill="url(#rg)"/>
 <path d="M3 13L20 8L32 14V22L15 27L3 21z" fill="#d8d2d0"/>
 <path d="M3 13L20 8L32 14L15 19z" fill="#f4f0ee"/>
 <path d="M3 14L15 20V27L3 21z" fill="#9a9290"/>
 <path d="M5 17L13 21V24L5 20z" fill="#302828"/>
</svg>
<!-- floppy -->
<svg style="left:271px;top:729px" width="29" height="31">
 <rect width="29" height="31" fill="#1e2a9a"/>
 <rect x="1.5" y="1.5" width="26" height="28" fill="#2834b8"/>
 <rect x="7" y="1" width="14" height="10" fill="#e8e8f0"/>
 <rect x="14" y="2" width="4" height="8" fill="#2834b8"/>
 <rect x="10" y="2" width="3" height="8" fill="#c8b080"/>
 <rect x="3" y="14" width="23" height="15" fill="#fff6f0"/>
 <path d="M4 18.5H25M4 22.5H25M4 26.5H25" stroke="#c83040" stroke-width="1.2"/>
</svg>
<!-- globe monitor -->
<svg style="left:307px;top:730px" width="32" height="29">
 <circle cx="11" cy="12" r="10.5" fill="#28c040"/>
 <path d="M4 6C8 9 12 5 16 8M3 14C7 16 12 13 17 17" stroke="#a0f0a8" stroke-width="1.2" fill="none"/>
 <rect x="11" y="5" width="20" height="16" fill="#0f3aa8"/>
 <rect x="13" y="7" width="16" height="12" fill="#7ec6f8"/>
 <path d="M18 21H24V24H18z" fill="#222"/>
 <path d="M12 24H30V28H12z" fill="#dfe6f0"/>
</svg>
<!-- newspaper -->
<svg style="left:348px;top:732px" width="30" height="24">
 <rect x="0.5" y="0.5" width="29" height="23" fill="#f6f4f2" stroke="#8e9aa8"/>
 <rect x="3" y="5" width="13" height="11" fill="#cfd8e0" stroke="#7a7270" stroke-width="0.8"/>
 <path d="M4 15V11C7 8 10 10 15 12V15z" fill="#2f5a40"/>
 <path d="M4 10C7 8 11 8 15 9" stroke="#8fb0c8" stroke-width="1.5"/>
 <path d="M18 5H27M18 8H27M18 11H27M18 14H27M3 19H27" stroke="#3a5a90" stroke-width="1.2"/>
</svg>
<!-- active button -->
<div class="a" style="left:393px;top:722px;width:161px;height:43px;background:#1f8dea"></div>
<div class="a" style="left:393px;top:760px;width:161px;height:2px;background:#9ed8ff"></div>
<svg style="left:404px;top:740px" width="30" height="16">
 <path d="M1 8L18 1L29 6V10L12 15.5L1 11z" fill="#e4d8d4"/>
 <path d="M1 8L18 1L29 6L12 12z" fill="#f6f0ee"/>
 <path d="M1 8.5L12 12.5V15.5L1 11z" fill="#b8aca8"/>
 <path d="M2 9.5L11 13V14.6L2 11.2z" fill="#2a1a14"/>
</svg>
<div class="x" style="left:439px;top:735px;color:#eef7ff">Локальный диск ...</div>
<!-- tray -->
<svg style="left:686px;top:736px" width="28" height="16">
 <rect x="0.7" y="0.7" width="26.6" height="14.6" fill="#0482f8" stroke="#fff" stroke-width="1.4"/>
 <g fill="#fff"><rect x="3" y="3" width="3" height="2.5"/><rect x="7" y="3" width="3" height="2.5"/><rect x="11" y="3" width="3" height="2.5"/><rect x="15" y="3" width="3" height="2.5"/><rect x="19" y="3" width="3" height="2.5"/><rect x="23" y="3" width="2.5" height="2.5"/>
 <rect x="3" y="7" width="3" height="2.5"/><rect x="7" y="7" width="3" height="2.5"/><rect x="11" y="7" width="3" height="2.5"/><rect x="15" y="7" width="3" height="2.5"/><rect x="19" y="7" width="3" height="2.5"/><rect x="23" y="7" width="2.5" height="2.5"/>
 <rect x="3" y="11" width="3" height="2.5"/><rect x="7" y="11" width="15" height="2.5"/><rect x="23" y="11" width="2.5" height="2.5"/></g>
</svg>
<svg style="left:726px;top:737px" width="16" height="15"><rect width="16" height="15" fill="#101418"/><path d="M1 8H4L5 4L7 12L9 3L11 11L12 7H15" fill="none" stroke="#8cd830" stroke-width="1.2"/><path d="M3 8L5 6L7 10" stroke="#e8c830" stroke-width="0.8" fill="none"/></svg>
<svg style="left:750px;top:738px" width="16" height="13"><path d="M1 2L15 9M1 10L15 3" stroke="#e0e8e0" stroke-width="2"/><path d="M2 3L9 6.5M2 9L8 6" stroke="#58b848" stroke-width="1.2"/></svg>
<svg style="left:773px;top:738px" width="17" height="14"><path d="M2 4C3 1 6 3 8 2C10 0 12 3 14 2C17 3 16 7 15 9C16 12 12 14 10 12C8 14 5 13 4 11C1 12 0 8 2 7z" fill="#f5c020" stroke="#3a2a10" stroke-width="1"/><path d="M6 6L8 8M10 5L12 7" stroke="#c04010" stroke-width="1.2"/></svg>
<svg style="left:798px;top:737px" width="18" height="15"><path d="M0 9L5 6L8 9L14 3L15 12L1 15z" fill="#30b830"/><path d="M1 10L6 7L9 10L14 5" stroke="#9ff09a" stroke-width="1.2" fill="none"/><path d="M12 2L15 0L17 3L14 5z" fill="#e8f0f8"/><text x="12.5" y="14.5" font-family="Liberation Sans" font-size="8" fill="#fff">3</text></svg>
<svg style="left:822px;top:737px" width="15" height="15"><rect width="15" height="15" fill="#e2b03a"/><rect x="1" y="1" width="13" height="13" fill="#f2d070"/><circle cx="7.5" cy="8" r="3.5" fill="none" stroke="#f8f0d0" stroke-width="1.4"/></svg>
<svg style="left:846px;top:738px" width="17" height="14"><path d="M4 1V13M4 13H7M5 2H15V9" fill="none" stroke="#fff" stroke-width="1.2"/><rect x="1.5" y="1" width="5" height="4" fill="none" stroke="#fff" stroke-width="1"/><rect x="9" y="7" width="8" height="7" fill="#d82a2a"/><path d="M10.8 8.8L15.2 12.2M15.2 8.8L10.8 12.2" stroke="#fff" stroke-width="1.3"/></svg>
<svg style="left:870px;top:738px" width="16" height="14"><path d="M1 5H4L8 1V12L4 8H1z" fill="none" stroke="#fff" stroke-width="1.1"/><rect x="8.5" y="6.5" width="7.5" height="7.5" rx="1" fill="#d82a2a"/><path d="M10.3 8.3L14.2 12.2M14.2 8.3L10.3 12.2" stroke="#fff" stroke-width="1.3"/></svg>
<div class="x" style="left:897px;top:738px;color:#eef7ff;letter-spacing:-0.9px">ENG</div>
<div class="x dt" style="left:960px;top:728px;color:#eef7ff">12:02</div>
<div class="x dt" style="left:945px;top:747px;color:#eef7ff">29.08.2018</div>

<!--/TASK-->

</body></html>
